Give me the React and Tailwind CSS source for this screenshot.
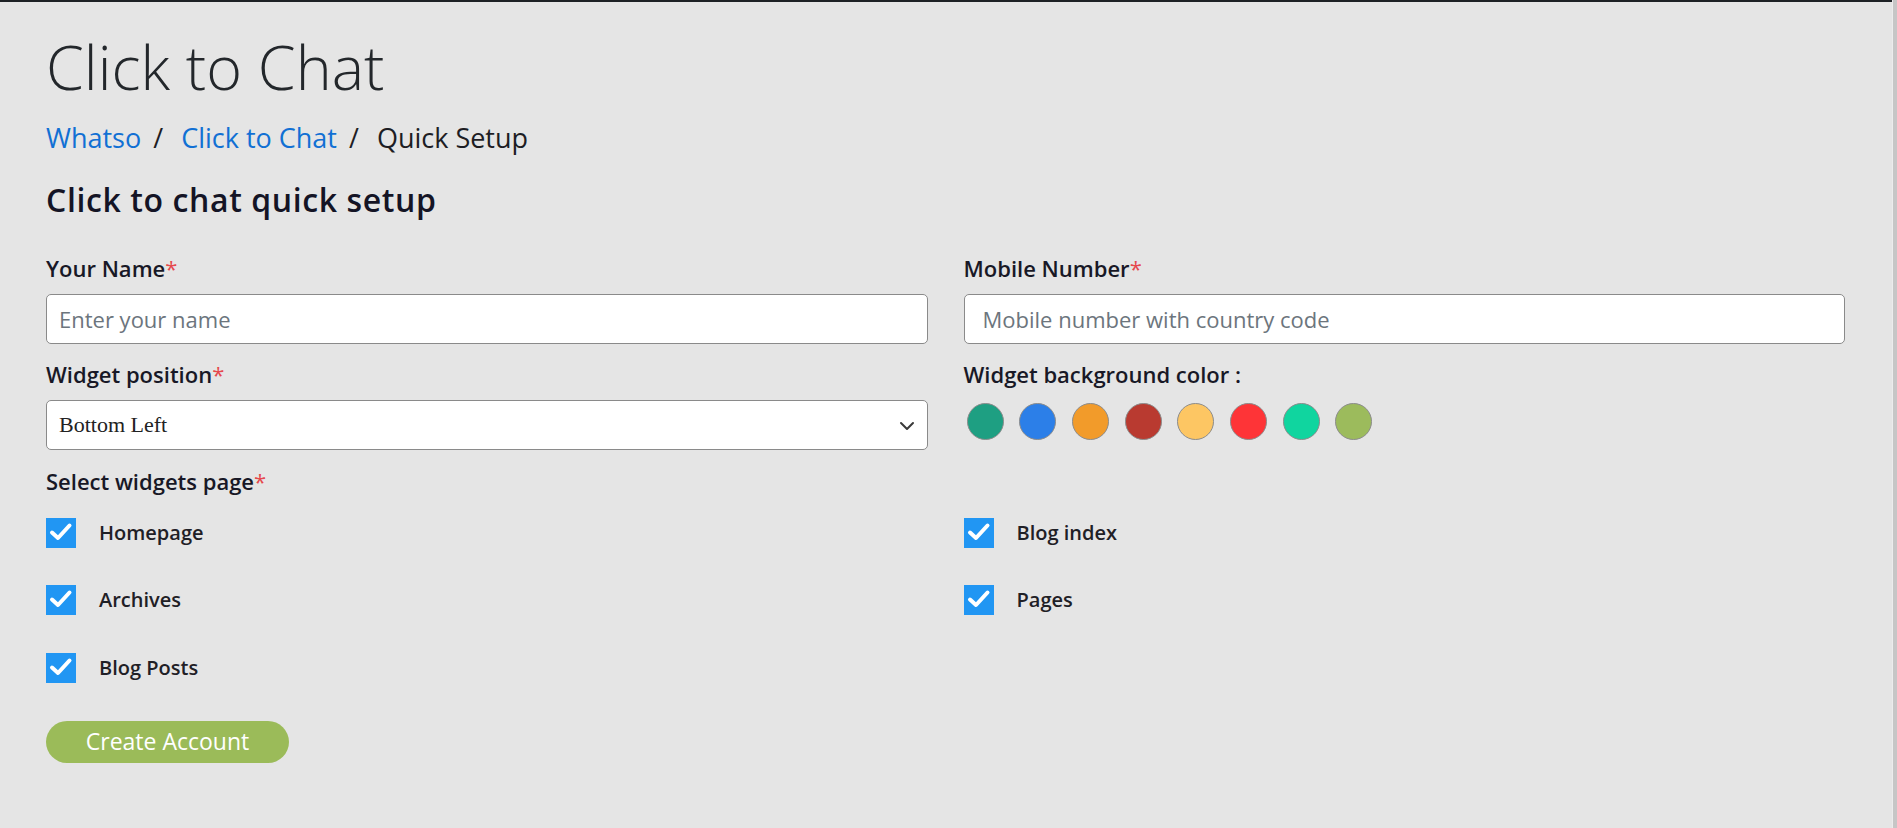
import { useState } from 'react';

const swatches = ['#1e9f82', '#2c7fe8', '#f29b2a', '#b93a30', '#fdc663', '#fe3437', '#10d59f', '#9cbb5c'];

const pages = [
  ['Homepage', 'Blog index'],
  ['Archives', 'Pages'],
  ['Blog Posts', null],
];

function Check({ label }) {
  const [on, setOn] = useState(true);
  return (
    <label className="flex items-center gap-[23px] cursor-pointer" onClick={() => setOn(!on)}>
      <span className={`flex h-[30px] w-[30px] items-center justify-center ${on ? 'bg-[#2196f3]' : 'bg-white border border-gray-400'}`}>
        {on && (
          <svg width="30" height="30" viewBox="0 0 30 30" fill="none">
            <path d="M6 14.5l6 5.5 11.5-12.5" stroke="white" strokeWidth="4" strokeLinecap="round" strokeLinejoin="round" />
          </svg>
        )}
      </span>
      <span className="text-[20px] font-semibold text-[#1f2026]">{label}</span>
    </label>
  );
}

function FieldLabel({ children, required }) {
  return (
    <div className="text-[22px] leading-[26px] font-semibold text-[#181826]">
      {children}
      {required && <span className="text-[#e5484d] font-normal">*</span>}
    </div>
  );
}

export default function App() {
  const [color, setColor] = useState(null);

  return (
    <div className="flex min-h-[828px] bg-[#e5e5e5] font-['Open_Sans',sans-serif]">
      <div className="flex-1 border-t-2 border-[#1d2125] pl-[46px] pr-[47px] pt-[29px]">
        <h1 className="text-[61px] leading-[72px] font-light text-[#23272b]">Click to Chat</h1>

        {/* breadcrumb */}
        <nav className="mt-[19px] flex items-center text-[27px] leading-[32px] text-[#1d1d24]">
          <a href="#" className="text-[#1170d4]">Whatso</a>
          <span className="ml-[12px] mr-[18px]">/</span>
          <a href="#" className="text-[#1170d4]">Click to Chat</a>
          <span className="ml-[12px] mr-[18px]">/</span>
          <span>Quick Setup</span>
        </nav>

        <h2 className="mt-[27px] text-[32px] leading-[38px] font-semibold tracking-[0.6px] text-[#141425]">Click to chat quick setup</h2>

        <div className="mt-[35.5px] grid grid-cols-2 gap-x-[36px] gap-y-[17px]">
          <div>
            <FieldLabel required>Your Name</FieldLabel>
            <input
              type="text"
              placeholder="Enter your name"
              className="mt-[13px] h-[50px] w-full rounded-[5px] border border-[#8a8a8a] bg-white px-[12px] text-[22px] text-[#222] placeholder:text-[#6c757d] outline-none"
            />
          </div>
          <div>
            <FieldLabel required>Mobile Number</FieldLabel>
            <input
              type="text"
              placeholder="Mobile number with country code"
              className="mt-[13px] h-[50px] w-full rounded-[5px] border border-[#8a8a8a] bg-white px-[18px] text-[22px] text-[#222] placeholder:text-[#6c757d] outline-none"
            />
          </div>

          <div>
            <FieldLabel required>Widget position</FieldLabel>
            <div className="relative mt-[13px]">
              <select className="h-[50px] w-full appearance-none rounded-[5px] border border-[#8a8a8a] bg-white px-[12px] font-['Liberation_Serif',serif] text-[22px] text-[#222] outline-none">
                <option>Bottom Left</option>
                <option>Bottom Right</option>
              </select>
              <svg className="pointer-events-none absolute right-[13px] top-[21px]" width="16" height="10" viewBox="0 0 16 10" fill="none">
                <path d="M2 2l6 6 6-6" stroke="#3a3a3a" strokeWidth="2" strokeLinecap="round" strokeLinejoin="round" />
              </svg>
            </div>
          </div>
          <div>
            <FieldLabel>Widget background color :</FieldLabel>
            <div className="mt-[16px] flex gap-[15.7px] pl-[3px]">
              {swatches.map((c) => (
                <button
                  key={c}
                  onClick={() => setColor(c)}
                  className={`h-[37px] w-[37px] rounded-full border ${color === c ? 'border-[#222] ring-2 ring-white' : 'border-[#8c8c8c]'}`}
                  style={{ backgroundColor: c }}
                />
              ))}
            </div>
          </div>
        </div>

        <div className="mt-[18px]">
          <FieldLabel required>Select widgets page</FieldLabel>
        </div>

        <div className="mt-[24px] grid grid-cols-2 gap-x-[36px] gap-y-[37.5px]">
          {pages.map(([a, b]) => (
            <div key={a} className="contents">
              <Check label={a} />
              {b ? <Check label={b} /> : <div />}
            </div>
          ))}
        </div>

        <button className="mt-[38px] h-[42px] w-[243px] rounded-full bg-[#9bbb59] text-[23px] text-white">
          Create Account
        </button>
      </div>
      <div className="w-[5px] border-l border-[#ececec] bg-[#c6c6c6]" />
    </div>
  );
}
